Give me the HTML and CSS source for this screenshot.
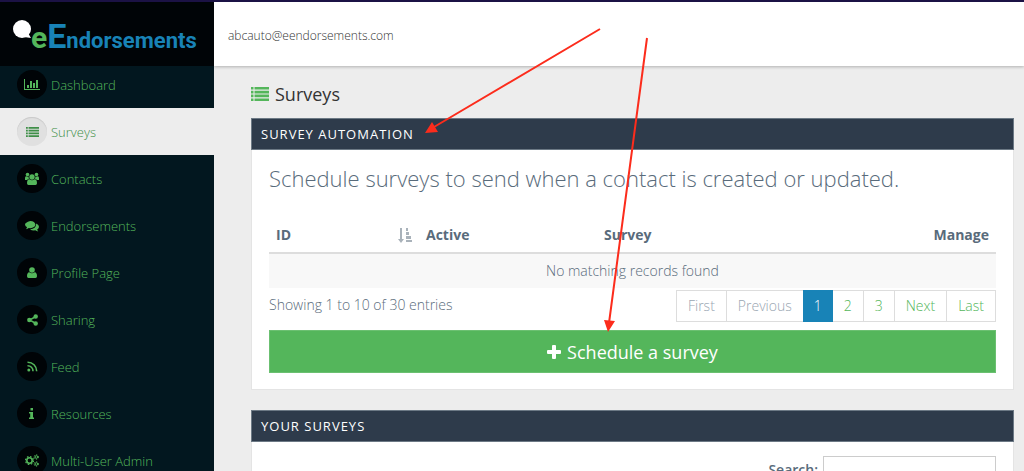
FILE: index.html
```html
<!DOCTYPE html>
<html lang="en">
<head>
  <meta charset="UTF-8" />
  <meta name="viewport" content="width=device-width, initial-scale=1.0"/>
  <title>eEndorsements - Surveys</title>
  <link rel="stylesheet" href="styles.css">
</head>
<body>
  <!-- Shared icons -->
  <svg class="sprite" aria-hidden="true">
    <symbol id="icon-list" viewBox="0 0 18 14" preserveAspectRatio="none">
      <path d="M0 0h2.500v2.600H0zM3.500 0H18v2.600H3.500zM0 3.800h2.500v2.600H0zM3.500 3.800H18v2.600H3.500zM0 7.600h2.500v2.600H0zM3.500 7.600H18v2.600H3.500zM0 11.400h2.500V14H0zM3.500 11.400H18V14H3.500z"/>
    </symbol>
  </svg>

  <div class="page">
    <aside class="sidebar">
      <a href="#" class="logo">
        <svg class="bubble" viewBox="0 0 18 18"><circle cx="9" cy="9" r="9"/><path d="M11 17l7 1-3-5z"/></svg>
        <span class="logo-e">e</span><span class="logo-text"><span class="logo-cap">E</span>ndorsements</span>
      </a>
      <nav class="menu">
        <a href="#" class="menu-item">
          <span class="menu-icon"><svg width="16" height="12" viewBox="0 0 16 12"><path d="M0 0h1v10h15v1H0zM3 6h2v3H3zM6 2h2v7H6zM9 4h2v5H9zM12 1h2v8h-2z"/></svg></span>
          Dashboard
        </a>
        <a href="#" class="menu-item active">
          <span class="menu-icon"><svg width="13" height="10"><use href="#icon-list"/></svg></span>
          Surveys
        </a>
        <a href="#" class="menu-item">
          <span class="menu-icon"><svg width="14" height="14" viewBox="0 0 14 14"><circle cx="2.500" cy="2.500" r="1.800"/><circle cx="11.500" cy="2.500" r="1.800"/><path d="M0 8V6q0-2 1.500-1.700 1 .6 2.200.2Q3.500 6 4 7 3 7 2 8zM14 8V6q0-2-1.500-1.700-1 .6-2.200.2Q10.500 6 10 7q1 0 2 1z"/><circle cx="7" cy="5" r="2.700"/><path d="M4.500 7.300q2.500 2 5 0 2.500 0 2.500 4Q12 13 10.500 13h-7Q2 13 2 11.300q0-4 2.500-4z"/></svg></span>
          Contacts
        </a>
        <a href="#" class="menu-item">
          <span class="menu-icon"><svg width="14" height="12" viewBox="0 0 14 12"><path d="M5.200 1C8.200 1 10.400 2.600 10.400 4.600S8.200 8.200 5.200 8.200q-.7 0-1.400-.1Q2.500 9.200.9 9.200 1.900 8.400 2 7.300 0 6.300 0 4.600 0 2.600 5.200 1z"/><path d="M11.300 3.500q2.700 1.200 2.700 3.300 0 1.700-1.800 2.700.2 1.100 1.100 1.900-1.700 0-3-1.100-3.300.5-5.300-1.100 6-.2 6.300-5.700z"/></svg></span>
          Endorsements
        </a>
        <a href="#" class="menu-item">
          <span class="menu-icon"><svg width="10" height="12" viewBox="0 0 10 12"><circle cx="5" cy="3" r="2.800"/><path d="M2.300 5.200q2.700 2.300 5.400 0Q10 5.500 10 9.200 10 11 8.500 11h-7Q0 11 0 9.200 0 5.500 2.300 5.200z"/></svg></span>
          Profile Page
        </a>
        <a href="#" class="menu-item">
          <span class="menu-icon"><svg width="11" height="12" viewBox="0 0 11 12"><path d="M9 2.500L2.500 6 9 9.500" fill="none" stroke="currentColor" stroke-width="1.500"/><circle cx="8.700" cy="2.500" r="2.200"/><circle cx="2.300" cy="6" r="2.200"/><circle cx="8.700" cy="9.500" r="2.200"/></svg></span>
          Sharing
        </a>
        <a href="#" class="menu-item">
          <span class="menu-icon"><svg width="11" height="11" viewBox="0 0 11 11"><circle cx="1.800" cy="9" r="1.500"/><path d="M.5 4.700A5.300 5.300 0 0 1 6 10.300M.5 1.200A9 9 0 0 1 9.700 10.300" fill="none" stroke="currentColor" stroke-width="1.600"/></svg></span>
          Feed
        </a>
        <a href="#" class="menu-item">
          <span class="menu-icon"><svg width="6" height="12" viewBox="0 0 6 12"><path d="M1.500 0h2.500v2.500H1.500zM0 4h4v5.500h1V11H0V9.500h1.200v-4H0z"/></svg></span>
          Resources
        </a>
        <a href="#" class="menu-item">
          <span class="menu-icon"><svg class="outline" width="14" height="13" viewBox="0 0 14 13"><circle cx="4.500" cy="6.500" r="2.700" stroke-width="1.600"/><circle cx="4.500" cy="6.500" r="4" stroke-width="1.200" stroke-dasharray="1.600 1.540"/><circle cx="11.300" cy="3" r="1.300"/><circle cx="11.300" cy="3" r="2.200" stroke-dasharray="1.150 1.150"/><circle cx="11.300" cy="10" r="1.300"/><circle cx="11.300" cy="10" r="2.200" stroke-dasharray="1.150 1.150"/></svg></span>
          Multi-User Admin
        </a>
      </nav>
    </aside>

    <div class="main">
      <header class="topbar">abcauto@eendorsements.com</header>

      <main class="content">
        <h1><svg width="18" height="14"><use href="#icon-list"/></svg>Surveys</h1>

        <section class="panel">
          <h2>SURVEY AUTOMATION</h2>
          <div class="panel-body">
            <p class="lead">Schedule surveys to send when a contact is created or updated.</p>

            <table>
              <thead>
                <tr>
                  <th class="col-id">
                    <div class="sortable">ID
                      <svg width="14" height="15" viewBox="0 0 14 15"><path d="M2 0h2v11h2l-3 4-3-4h2zM8 0h2v3H8zM8 4h3v3H8zM8 8h5v3H8zM8 12h6v2H8z"/></svg>
                    </div>
                  </th>
                  <th class="col-active">Active</th>
                  <th>Survey</th>
                  <th class="col-manage">Manage</th>
                </tr>
              </thead>
              <tbody>
                <tr>
                  <td colspan="4">No matching records found</td>
                </tr>
              </tbody>
            </table>

            <div class="table-footer">
              <span>Showing 1 to 10 of 30 entries</span>
              <nav class="pagination">
                <a href="#" class="disabled">First</a>
                <a href="#" class="disabled">Previous</a>
                <a href="#" class="current">1</a>
                <a href="#">2</a>
                <a href="#">3</a>
                <a href="#">Next</a>
                <a href="#">Last</a>
              </nav>
            </div>

            <button type="button" class="btn-schedule">
              <svg width="14" height="14" viewBox="0 0 14 14"><path d="M6 0h2q1 0 1 1v4h4q1 0 1 1v2q0 1-1 1H9v4q0 1-1 1H6q-1 0-1-1V9H1Q0 9 0 8V6q0-1 1-1h4V1q0-1 1-1z"/></svg>
              Schedule a survey
            </button>
          </div>
        </section>

        <section class="panel">
          <h2>YOUR SURVEYS</h2>
          <div class="panel-body search-row">
            <label for="search">Search:</label>
            <input type="text" id="search">
          </div>
        </section>
      </main>
    </div>
  </div>

  <!-- Callout arrows -->
  <svg class="arrows" width="1024" height="471" viewBox="0 0 1024 471" aria-hidden="true">
    <path class="shaft" d="M600 29L434 127M647 38L609 323"/>
    <path class="tip" d="M425 133L432 122L438 132zM608 332L604 320L615 321z"/>
  </svg>
</body>
</html>
```

FILE: styles.css
```css
:root {
  --green: #54b65b;
  --blue: #1883b7;
  --navy: #2e3b4b;
  --sidebar: #02171f;
  --background: #ededed;
  --border: #dddddd;
  --text: #596b7b;
}

* {
  box-sizing: border-box;
  margin: 0;
  padding: 0;
}

body {
  font-family: 'Open Sans', sans-serif;
  font-weight: 300;
  font-size: 14px;
  line-height: 20px;
  color: var(--text);
  background-color: var(--background);
}

a {
  color: var(--green);
  text-decoration: none;
}

svg {
  fill: currentColor;
  flex-shrink: 0;
}

svg.outline {
  fill: none;
  stroke: currentColor;
}

.sprite {
  display: none;
}

.page {
  display: flex;
  height: 100vh;
  overflow: hidden;
  border-top: 2px solid #1b1245;
}

/* Sidebar */
.sidebar {
  width: 214px;
  flex-shrink: 0;
  background-color: var(--sidebar);
}

.logo {
  position: relative;
  display: flex;
  align-items: baseline;
  height: 64px;
  padding: 14px 0 0 13px;
  background-color: #000407;
  font-family: 'Roboto', sans-serif;
  font-weight: 700;
  line-height: 40px;
  white-space: nowrap;
}

.bubble {
  width: 18px;
  height: 18px;
  align-self: flex-start;
  margin-top: 4px;
  color: #ffffff;
}

.logo-e {
  font-size: 30px;
  color: var(--green);
}

.logo-text {
  font-size: 22px;
  color: var(--blue);
}

.logo-cap {
  font-size: 34px;
}

.menu {
  margin-top: -5px;
}

.menu-item {
  display: flex;
  align-items: center;
  gap: 4px;
  height: 47px;
  padding-left: 17px;
  font-size: 13px;
}

.menu-item.active {
  background-color: var(--background);
  color: #3f8f48;
}

.menu-icon {
  display: flex;
  align-items: center;
  justify-content: center;
  width: 30px;
  height: 29px;
  border-radius: 50%;
  background-color: #000407;
}

.menu-item.active .menu-icon {
  background-color: #e0e0e0;
  box-shadow: inset 0 1px 1px #c8c8c8;
}

/* Main column */
.main {
  flex: 1;
  min-width: 0;
}

.topbar {
  height: 64px;
  padding: 24px 14px 0;
  background-color: #ffffff;
  box-shadow: 0 1px 3px rgba(0, 0, 0, 0.25);
  font-size: 12px;
  color: #333333;
}

.content {
  padding: 16px 10px 0 37px;
}

h1 {
  display: flex;
  align-items: center;
  gap: 6px;
  height: 24px;
  margin-bottom: 12px;
  font-size: 18px;
  font-weight: 400;
  color: #333333;
}

h1 svg {
  color: var(--green);
}

.panel {
  margin-bottom: 20px;
  background-color: #ffffff;
  border: 1px solid #e4e4e4;
  border-top: none;
}

.panel h2 {
  margin: 0 -1px;
  padding: 5px 9px;
  border: 1px solid #6c7985;
  background-color: var(--navy);
  color: #ffffff;
  font-size: 13px;
  font-weight: 400;
  letter-spacing: 1px;
}

.panel-body {
  padding: 14px 17px 16px;
}

.lead {
  margin-bottom: 26px;
  font-size: 22px;
  line-height: 28px;
}

table {
  width: 100%;
  border-collapse: collapse;
  table-layout: fixed;
}

th {
  padding: 7px;
  border-bottom: 2px solid var(--border);
  font-weight: 700;
  text-align: left;
}

.col-id {
  width: 150px;
}

.col-active {
  width: 178px;
}

.col-manage {
  text-align: right;
}

.sortable {
  display: flex;
  align-items: center;
  justify-content: space-between;
}

.sortable svg {
  color: #a9b2ba;
}

td {
  padding: 7px;
  background-color: #f8f8f8;
  text-align: center;
}

.table-footer {
  display: flex;
  justify-content: space-between;
  margin: 2px 0 8px;
  line-height: 30px;
}

.pagination {
  display: flex;
  border: 1px solid var(--border);
}

.pagination a {
  padding: 0 11px;
  border-left: 1px solid var(--border);
}

.pagination a:first-child {
  border-left: none;
}

.pagination a.disabled {
  color: #98a5b1;
}

.pagination a.current {
  margin: -1px 0;
  padding: 1px 11px;
  border: none;
  background-color: var(--blue);
  color: #ffffff;
}

.pagination a.current + a {
  border-left: none;
}

.btn-schedule {
  display: flex;
  align-items: center;
  justify-content: center;
  gap: 6px;
  width: 100%;
  height: 43px;
  border: 1px solid #6bc071;
  background-color: var(--green);
  color: #ffffff;
  font-family: inherit;
  font-size: 18px;
  font-weight: 400;
  cursor: pointer;
}

.search-row {
  display: flex;
  align-items: center;
  justify-content: flex-end;
  gap: 5px;
}

.search-row label {
  font-weight: 600;
}

.search-row input {
  width: 173px;
  height: 28px;
  border: 1px solid #cccccc;
  background-color: #ffffff;
}

/* Arrows drawn over the page */
.arrows {
  position: absolute;
  top: 0;
  left: 0;
  pointer-events: none;
}

.shaft {
  fill: none;
  stroke: #fc2c1c;
  stroke-width: 2;
}

.tip {
  fill: #fc2c1c;
}
```
